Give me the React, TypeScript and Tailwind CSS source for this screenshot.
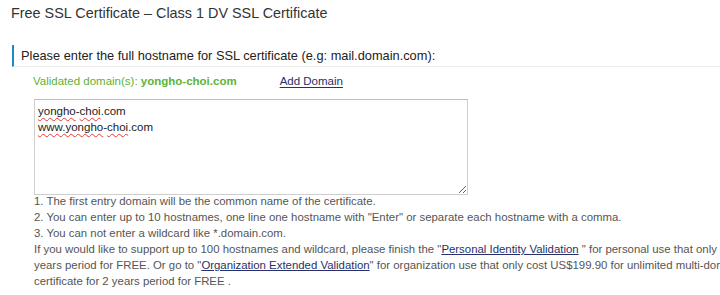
const notes = [
  "1. The first entry domain will be the common name of the certificate.",
  '2. You can enter up to 10 hostnames, one line one hostname with "Enter" or separate each hostname with a comma.',
  "3. You can not enter a wildcard like *.domain.com.",
];

const Squiggle = ({ children }: { children: React.ReactNode }) => (
  <span className="underline decoration-wavy decoration-[#e53935] decoration-1 underline-offset-2">
    {children}
  </span>
);

export default function App() {
  return (
    <div className="w-[720px] h-[295px] overflow-hidden bg-white font-['Liberation_Sans',Arial,sans-serif] text-[#333]">
      <h1 className="pl-[11px] pt-[2px] text-[14.4px] leading-[22px] font-normal">
        Free SSL Certificate – Class 1 DV SSL Certificate
      </h1>

      <div className="ml-[12px] mt-[21px] border-l-2 border-[#1e88c8] border-b border-b-[#ececec] pl-[7px] h-[22px] flex items-center">
        <span className="text-[12.8px] leading-[20px] text-[#222]">
          Please enter the full hostname for SSL certificate (e.g: mail.domain.com):
        </span>
      </div>

      <div className="pl-[34px] w-[800px]">
        <div className="flex items-center h-[20px] mt-[5px] text-[11.5px]">
          <span className="text-[#5cb33a] ml-[-1px]">
            Validated domain(s): <b className="font-bold">yongho-choi.com</b>
          </span>
          <a className="ml-[43px] text-[#27306b] underline underline-offset-2">Add Domain</a>
        </div>

        <div className="mt-[7px] w-[434px] h-[96px] border border-[#cfcfcf] border-t-[#bdbdbd] resize overflow-auto px-[3px] pt-[3px] text-[11.5px] leading-[16px] text-[#222]">
          <div>
            <Squiggle>yongho</Squiggle>-<Squiggle>choi</Squiggle>.com
          </div>
          <div>
            <Squiggle>www.yongho</Squiggle>-<Squiggle>choi</Squiggle>.com
          </div>
        </div>

        <div className="text-[11.4px] leading-[16px] text-[#555] -mt-[2px]">
          {notes.map((n) => (
            <p key={n}>{n}</p>
          ))}
          <p className="whitespace-nowrap">
            If you would like to support up to 100 hostnames and wildcard, please finish the "
            <a className="text-[#27306b] underline">Personal Identity Validation</a> " for personal
            use that only cost US$59.90 for 2
            <br />
            years period for FREE. Or go to "
            <a className="text-[#27306b] underline">Organization Extended Validation</a>" for
            organization use that only cost US$199.90 for unlimited multi-domain
            <br />
            certificate for 2 years period for FREE .
          </p>
        </div>
      </div>
    </div>
  );
}
